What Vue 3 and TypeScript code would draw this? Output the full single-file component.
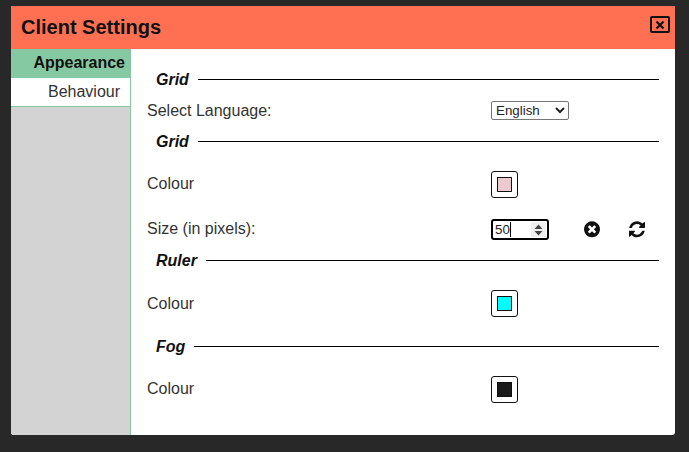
<script setup lang="ts">
import { ref } from "vue";

const gridSize = ref<number>(50);
const language = ref<string>("en");
</script>

<template>
  <div class="page">
    <div class="dialog">
      <header class="header">
        <h1>Client Settings</h1>
        <button class="close" aria-label="Close">
          <svg width="10" height="10" viewBox="0 0 10 10">
            <path d="M1.5 1.5l7 7M8.5 1.5l-7 7" stroke="#111" stroke-width="2.2" />
          </svg>
        </button>
      </header>
      <div class="body">
        <nav class="tabs">
          <div class="tab active">Appearance</div>
          <div class="tab">Behaviour</div>
        </nav>
        <main class="content">
          <div class="legend first"><span>Grid</span></div>
          <div class="row select-row">
            <label>Select Language:</label>
            <select v-model="language">
              <option value="en">English</option>
            </select>
          </div>
          <div class="legend after-select"><span>Grid</span></div>
          <div class="row swatch-row">
            <label class="up">Colour</label>
            <div class="swatch"><i style="background: #ebcbd1"></i></div>
          </div>
          <div class="row size-row">
            <label class="up">Size (in pixels):</label>
            <div class="number">
              <input v-model.number="gridSize" type="number" />
              <span class="caret"></span>
              <span class="spinner">
                <svg width="9" height="12" viewBox="0 0 9 12">
                  <path d="M4.5 0.5L8.5 5H0.5zM4.5 11.5L0.5 7H8.5z" fill="#444" />
                </svg>
              </span>
            </div>
            <svg class="icon clear" viewBox="0 0 1536 1792">
              <path d="M1149 1122q0-26-19-45l-181-181 181-181q19-19 19-45 0-27-19-46l-90-90q-19-19-46-19-26 0-45 19l-181 181-181-181q-19-19-45-19-27 0-46 19l-90 90q-19 19-19 46 0 26 19 45l181 181-181 181q-19 19-19 45 0 27 19 46l90 90q19 19 46 19 26 0 45-19l181-181 181 181q19 19 45 19 27 0 46-19l90-90q19-19 19-46zm387-226q0 209-103 385.5t-279.5 279.5-385.5 103-385.5-103-279.5-279.5-103-385.5 103-385.5 279.5-279.5 385.5-103 385.5 103 279.5 279.5 103 385.5z" />
            </svg>
            <svg class="icon reset" viewBox="0 0 1536 1792">
              <path d="M1511 1056q0 5-1 7-64 268-268 434.5t-478 166.5q-146 0-282.5-55t-243.5-157l-129 129q-19 19-45 19t-45-19-19-45v-448q0-26 19-45t45-19h448q26 0 45 19t19 45-19 45l-137 137q71 66 161 102t187 36q134 0 250-65t186-179q11-17 53-117 8-23 30-23h192q13 0 22.5 9.5t9.5 22.5zm25-800v448q0 26-19 45t-45 19h-448q-26 0-45-19t-19-45 19-45l138-138q-148-137-349-137-134 0-250 65t-186 179q-11 17-53 117-8 23-30 23h-199q-13 0-22.5-9.5t-9.5-22.5v-7q65-268 270-434.5t480-166.5q146 0 284 55.5t245 156.5l130-129q19-19 45-19t45 19 19 45z" />
            </svg>
          </div>
          <div class="legend after-size"><span>Ruler</span></div>
          <div class="row swatch-row">
            <label>Colour</label>
            <div class="swatch"><i style="background: #00ffff"></i></div>
          </div>
          <div class="legend after-swatch"><span>Fog</span></div>
          <div class="row swatch-row">
            <label class="up">Colour</label>
            <div class="swatch"><i style="background: #1a1a1a"></i></div>
          </div>
        </main>
      </div>
    </div>
  </div>
</template>

<style>
body {
  background: #282828;
}
</style>

<style scoped>
.page {
  height: 452px;
  padding: 6px 14px 17px 11px;
  box-sizing: border-box;
  font-family: "Liberation Sans", Arial, sans-serif;
  overflow: hidden;
}

.dialog {
  height: 429px;
  display: flex;
  flex-direction: column;
  background: #fff;
  border-radius: 0 0 3px 3px;
  overflow: hidden;
}

.header {
  height: 43px;
  flex: none;
  display: flex;
  align-items: center;
  justify-content: space-between;
  padding: 0 5px 0 10px;
  background: #ff7052;
}

.header h1 {
  margin: 0;
  font-size: 20px;
  font-weight: bold;
  color: #111;
}

.close {
  width: 20px;
  height: 17px;
  margin-bottom: 6px;
  padding: 0;
  display: flex;
  align-items: center;
  justify-content: center;
  background: transparent;
  border: 2px solid #111;
  border-radius: 2px;
}

.body {
  flex: 1;
  display: flex;
  min-height: 0;
}

.tabs {
  width: 119px;
  flex: none;
  background: #d3d3d3;
  border-right: 1px solid #85c9a2;
}

.tab {
  height: 28px;
  line-height: 28px;
  padding-right: 10px;
  text-align: right;
  font-size: 16px;
  color: #333;
  background: #fff;
  border-bottom: 1px solid #85c9a2;
}

.tab.active {
  padding-right: 5px;
  font-weight: bold;
  color: #111;
  background: #85c9a2;
  border-bottom: 0;
  height: 29px;
}

.content {
  flex: 1;
  padding: 20px 16px 0;
  min-width: 0;
}

.legend {
  height: 20px;
  display: flex;
  align-items: center;
  gap: 9px;
  padding-left: 9px;
  font-size: 16px;
  font-weight: bold;
  font-style: italic;
  color: #111;
}

.legend span {
  margin-top: 2px;
}

.legend::after {
  content: "";
  flex: 1;
  height: 1px;
  background: #000;
}

.legend.after-select {
  margin-top: 11px;
}

.legend.after-size {
  margin-top: 10px;
}

.legend.after-swatch {
  margin-top: 19px;
}

.row {
  display: flex;
  align-items: center;
  font-size: 16px;
  color: #333;
}

.row label {
  width: 344px;
  flex: none;
}

.row label.up {
  margin-bottom: 2px;
}

.select-row {
  height: 19px;
  margin-top: 12px;
}

.swatch-row {
  height: 27px;
  margin-top: 20px;
}

.size-row {
  height: 21px;
  margin-top: 21px;
}

select {
  width: 78px;
  height: 19px;
  font-family: "Liberation Sans", Arial, sans-serif;
  font-size: 13.33px;
  color: #222;
  background: #fff;
  border: 1px solid #767676;
  border-radius: 2px;
}

.swatch {
  width: 27px;
  height: 27px;
  box-sizing: border-box;
  display: flex;
  align-items: center;
  justify-content: center;
  border: 1px solid #111;
  border-radius: 3px;
}

.swatch i {
  width: 13px;
  height: 13px;
  border: 1px solid #111;
  display: block;
}

.number {
  position: relative;
  width: 58px;
  height: 21px;
  flex: none;
}

input {
  width: 100%;
  height: 100%;
  box-sizing: border-box;
  padding: 1px 2px;
  font-family: "Liberation Sans", Arial, sans-serif;
  font-size: 13.33px;
  color: #222;
  border: 2px solid #000;
  border-radius: 3px;
  outline: none;
  appearance: textfield;
}

input::-webkit-inner-spin-button,
input::-webkit-outer-spin-button {
  appearance: none;
  margin: 0;
}

.caret {
  position: absolute;
  left: 19px;
  top: 3px;
  width: 1px;
  height: 15px;
  background: #000;
}

.spinner {
  position: absolute;
  right: 3px;
  top: 3px;
  width: 15px;
  height: 15px;
  display: flex;
  align-items: center;
  justify-content: center;
  background: #efefef;
}

.icon {
  width: 16px;
  height: 18.67px;
  fill: #111;
}

.clear {
  margin-left: 35px;
}

.reset {
  margin-left: 29px;
}
</style>
